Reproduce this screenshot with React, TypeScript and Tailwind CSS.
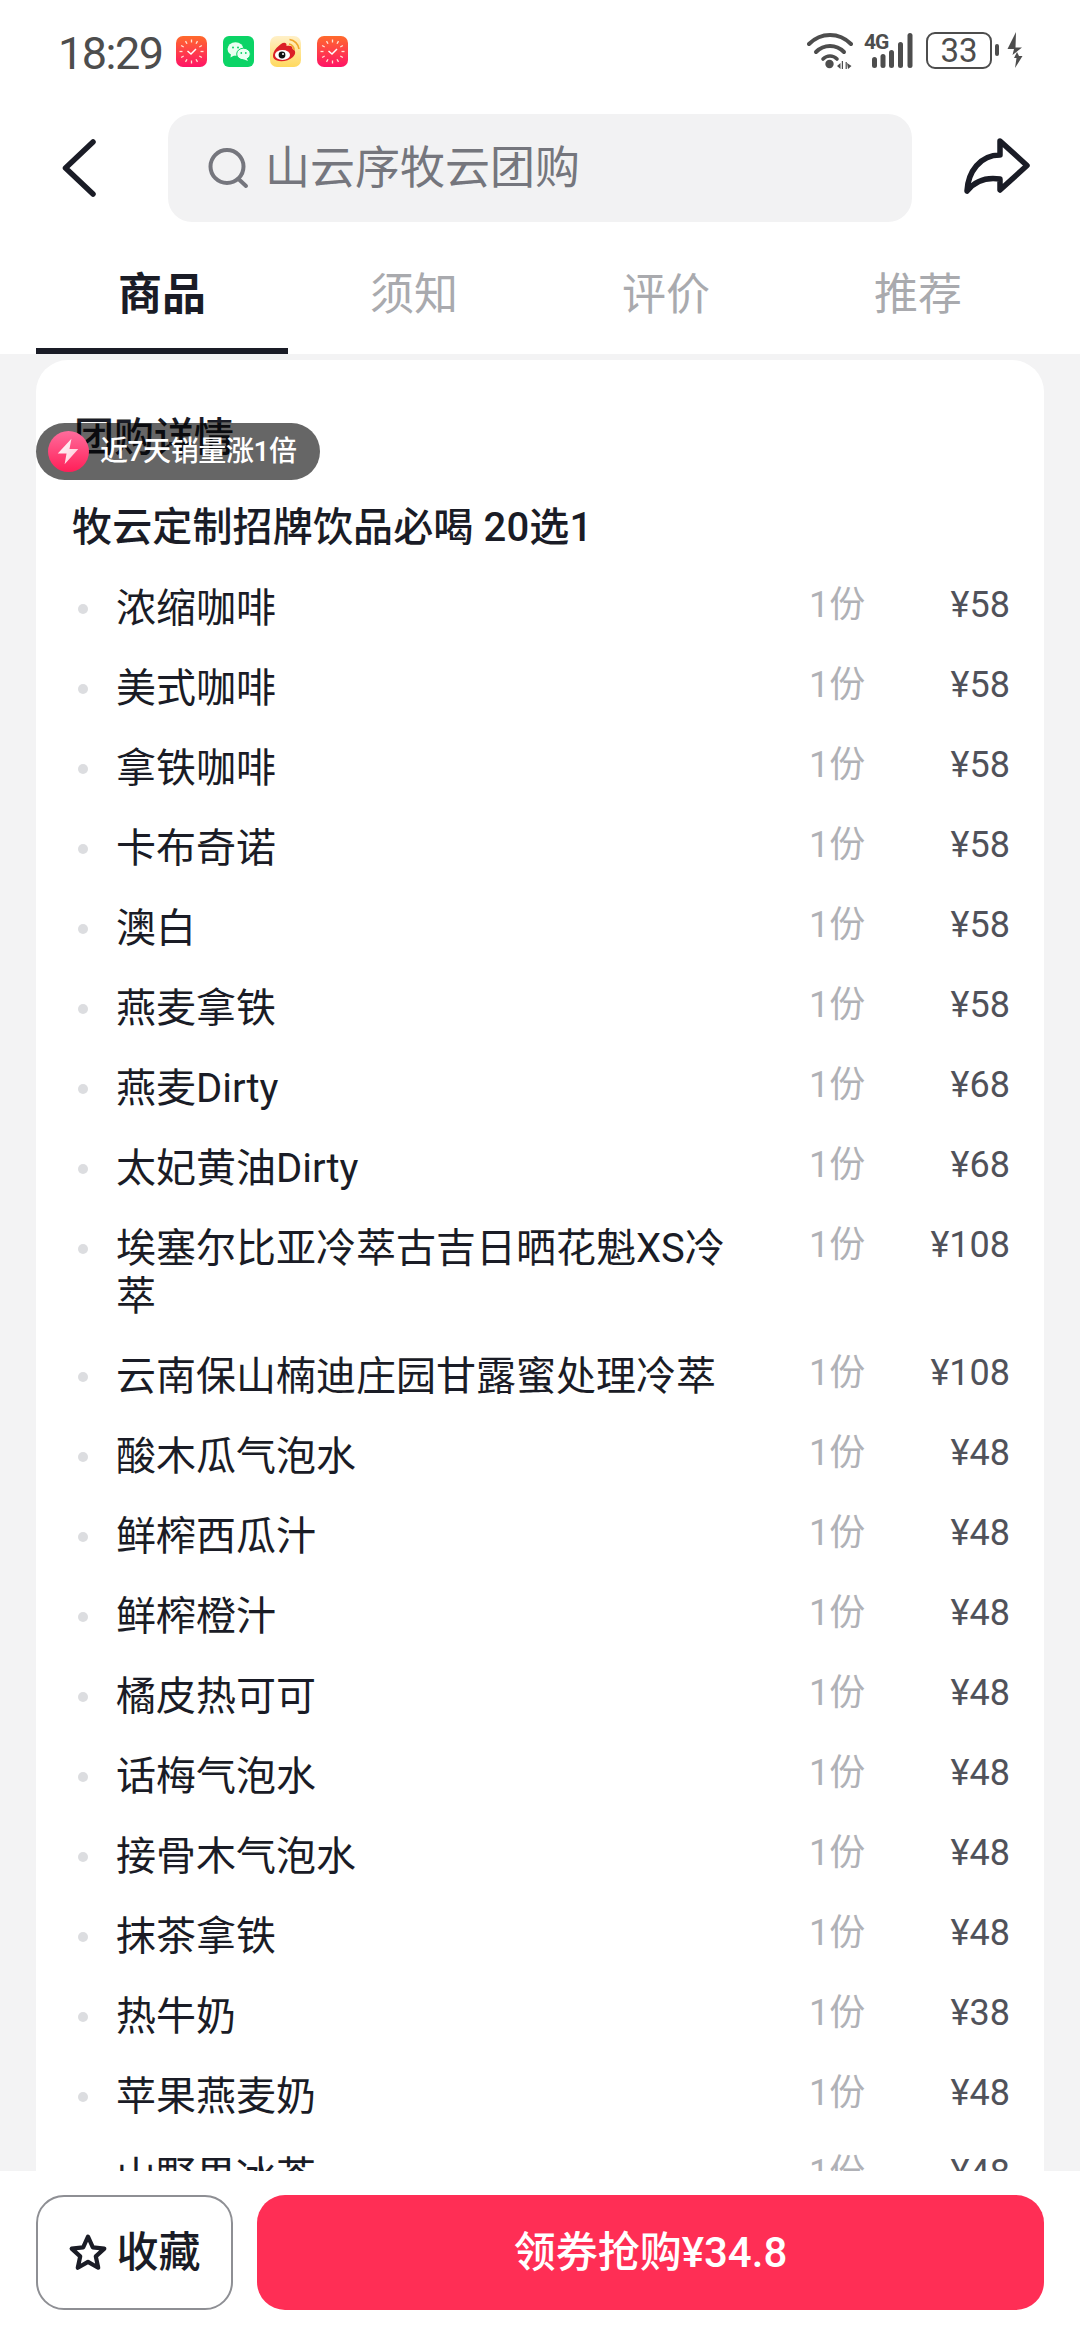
import React from "react";

const items: [string, string][] = [
  ["浓缩咖啡", "¥58"],
  ["美式咖啡", "¥58"],
  ["拿铁咖啡", "¥58"],
  ["卡布奇诺", "¥58"],
  ["澳白", "¥58"],
  ["燕麦拿铁", "¥58"],
  ["燕麦Dirty", "¥68"],
  ["太妃黄油Dirty", "¥68"],
  ["埃塞尔比亚冷萃古吉日晒花魁XS冷萃", "¥108"],
  ["云南保山楠迪庄园甘露蜜处理冷萃", "¥108"],
  ["酸木瓜气泡水", "¥48"],
  ["鲜榨西瓜汁", "¥48"],
  ["鲜榨橙汁", "¥48"],
  ["橘皮热可可", "¥48"],
  ["话梅气泡水", "¥48"],
  ["接骨木气泡水", "¥48"],
  ["抹茶拿铁", "¥48"],
  ["热牛奶", "¥38"],
  ["苹果燕麦奶", "¥48"],
  ["山野果冰茶", "¥48"],
];

function ClockIcon({ id }: { id: string }) {
  const ticks = [0, 30, 60, 90, 120, 150, 180, 210, 240, 270, 300, 330];
  return (
    <svg width="31" height="31" viewBox="0 0 31 31" className="shrink-0">
      <defs>
        <linearGradient id={id} x1="0" y1="0" x2="0" y2="1">
          <stop offset="0" stopColor="#ff6a2c" />
          <stop offset="1" stopColor="#ff1366" />
        </linearGradient>
      </defs>
      <rect width="31" height="31" rx="7" fill={`url(#${id})`} />
      {ticks.map((a) => (
        <line
          key={a}
          x1="15.5"
          y1="3.5"
          x2="15.5"
          y2="6.5"
          stroke="#ffe3d6"
          strokeWidth="1.3"
          transform={`rotate(${a} 15.5 15.5)`}
        />
      ))}
      <path d="M11.5 15 L15 18 L20 13" fill="none" stroke="#fff" strokeWidth="1.5" />
    </svg>
  );
}

function WeChatIcon() {
  return (
    <svg width="31" height="31" viewBox="0 0 31 31" className="shrink-0">
      <rect width="31" height="31" rx="6" fill="#0bd466" />
      <ellipse cx="12.5" cy="13" rx="8" ry="6.8" fill="#eafff2" />
      <path d="M8 17.5 L7.5 21.5 L12 19Z" fill="#eafff2" />
      <ellipse cx="20.5" cy="18" rx="6.8" ry="5.8" fill="#eafff2" stroke="#0bd466" strokeWidth="1" />
      <path d="M23.5 22 L25 25 L20.5 23.3Z" fill="#eafff2" />
      <circle cx="10" cy="11.5" r="1" fill="#0bd466" />
      <circle cx="15" cy="11.5" r="1" fill="#0bd466" />
      <circle cx="18.3" cy="17" r="0.9" fill="#0bd466" />
      <circle cx="22.8" cy="17" r="0.9" fill="#0bd466" />
    </svg>
  );
}

function WeiboIcon() {
  return (
    <svg width="31" height="31" viewBox="0 0 31 31" className="shrink-0">
      <defs>
        <linearGradient id="wb" x1="0" y1="0" x2="0" y2="1">
          <stop offset="0" stopColor="#fff0c8" />
          <stop offset="1" stopColor="#ffd95e" />
        </linearGradient>
      </defs>
      <rect width="31" height="31" rx="7" fill="url(#wb)" />
      <path
        d="M3 20 C3 15 7 11 11 8 C14 6 17 6.5 16.5 10 C20 9 23 10 22.5 13 C26 14 26 18 23 21 C19 25 11 26 7 24.5 C4.5 23.5 3 22 3 20Z"
        fill="#dc1f26"
      />
      <ellipse cx="12.5" cy="19" rx="7.5" ry="5" fill="#fff" />
      <circle cx="12" cy="19" r="3.4" fill="#111" />
      <circle cx="13" cy="18" r="1" fill="#fff" />
      <path d="M19 8 A6 6 0 0 1 24 14" fill="none" stroke="#f0a62a" strokeWidth="1.6" />
      <path d="M19.5 3.5 A11 11 0 0 1 29 13" fill="none" stroke="#f0a62a" strokeWidth="1.6" />
    </svg>
  );
}

function StatusRight() {
  return (
    <div className="flex items-start">
      <svg width="46" height="38" viewBox="0 0 46 38" className="shrink-0">
        <path d="M2 12 C14 0 32 0 44 12" fill="none" stroke="#4d4d4d" strokeWidth="4" strokeLinecap="round" />
        <path d="M9 20 C17 12 29 12 37 20" fill="none" stroke="#4d4d4d" strokeWidth="4" strokeLinecap="round" />
        <path d="M16 27 C20 23 26 23 30 27" fill="none" stroke="#4d4d4d" strokeWidth="3.6" strokeLinecap="round" />
        <circle cx="22.5" cy="32" r="4.2" fill="#4d4d4d" />
        <path d="M33.5 31 L33.5 37 L30 34Z M36 29 L36 37 L34.8 37 L34.8 29Z" fill="#4d4d4d" />
        <path d="M40 31 L44.5 34 L41 37Z M38.6 30 L39.8 30 L39.8 37 L38.6 37Z" fill="#4d4d4d" />
      </svg>
      <div className="relative ml-[11px] w-[50px] h-[38px]">
        <span className="absolute left-0 top-[-2px] text-[21px] leading-[24px] font-bold text-[#4d4d4d] tracking-[-1px] font-['Roboto',sans-serif]">
          4G
        </span>
        <svg width="50" height="38" viewBox="0 0 50 38" className="absolute left-0 top-0">
          <rect x="8" y="25" width="5" height="11" rx="2.5" fill="#4d4d4d" />
          <rect x="16.5" y="22" width="5" height="14" rx="2.5" fill="#4d4d4d" />
          <rect x="25" y="18" width="5" height="18" rx="2.5" fill="#4d4d4d" />
          <rect x="34" y="10" width="5" height="26" rx="2.5" fill="#4d4d4d" />
          <rect x="43.5" y="1" width="5" height="35" rx="2.5" fill="#4d4d4d" />
        </svg>
      </div>
      <div className="ml-[12px] w-[66px] h-[37px] rounded-[9px] border-[2px] border-[#4d4d4d] flex items-center justify-center text-[33px] leading-none text-[#4d4d4d] font-normal font-['Roboto',sans-serif]">
        33
      </div>
      <div className="ml-[3px] mt-[12px] w-[4px] h-[12px] rounded-[2px] bg-[#4d4d4d]" />
      <svg width="16" height="37" viewBox="0 0 16 37" className="ml-[8px] shrink-0">
        <path d="M9 0 L0.5 17 L7 17 L5.5 23 L15 15.5 L8.5 15.5 Z" fill="#4d4d4d" />
        <path d="M10 20 L7 26 L9.5 26 L8 36 L15.5 24 L12 24Z" fill="#4d4d4d" />
      </svg>
    </div>
  );
}

export default function App() {
  return (
    <div className="w-[1080px] h-[2340px] overflow-hidden bg-white flex flex-col font-['Roboto','Noto_Sans_CJK_SC',sans-serif]">
      {/* status bar */}
      <div className="h-[114px] shrink-0 flex items-start pl-[58px] pr-[57px] pt-[32px]">
        <span className="text-[45px] leading-[44px] tracking-[-1.5px] text-[#4d4d4d] w-[118px] shrink-0">18:29</span>
        <div className="flex gap-[16px] mt-[4px]">
          <ClockIcon id="c1" />
          <WeChatIcon />
          <WeiboIcon />
          <ClockIcon id="c2" />
        </div>
        <div className="ml-auto">
          <StatusRight />
        </div>
      </div>

      {/* header */}
      <div className="h-[108px] shrink-0 flex items-center pl-[36px]">
        <svg width="132" height="108" viewBox="0 0 132 108" className="shrink-0">
          <path
            d="M57 28 L29.5 54 L57 80"
            fill="none"
            stroke="#1a1c26"
            strokeWidth="5.5"
            strokeLinecap="round"
            strokeLinejoin="round"
          />
        </svg>
        <div className="w-[744px] h-[108px] rounded-[24px] bg-[#f2f2f3] flex items-center pl-[40px] shrink-0">
          <svg width="42" height="44" viewBox="0 0 42 44" className="shrink-0">
            <circle cx="19" cy="20.5" r="16.5" fill="none" stroke="#75767d" strokeWidth="4" />
            <path d="M30.5 33 L38 40" stroke="#75767d" strokeWidth="4" strokeLinecap="round" />
          </svg>
          <span className="ml-[15px] pt-[2px] text-[45px] leading-[52px] text-[#75767d]">山云序牧云团购</span>
        </div>
        <svg width="85" height="76" viewBox="0 0 85 76" className="ml-[43px] shrink-0">
          <path
            d="M45 11 L72 35.5 L45 60 L45 49 C32 47 20 51 12 61 C13 42 25 25 45 25 Z"
            fill="none"
            stroke="#1a1c26"
            strokeWidth="5.5"
            strokeLinecap="round"
            strokeLinejoin="round"
          />
        </svg>
      </div>

      {/* tabs */}
      <div className="h-[132px] shrink-0 px-[36px] grid grid-cols-4">
        <div className="flex items-center justify-center border-b-[6px] border-[#1a1c26] pt-[20px] text-[44px] font-bold text-[#1a1c26]">
          商品
        </div>
        <div className="flex items-center justify-center pt-[14px] text-[44px] text-[#a9aaae]">须知</div>
        <div className="flex items-center justify-center pt-[14px] text-[44px] text-[#a9aaae]">评价</div>
        <div className="flex items-center justify-center pt-[14px] text-[44px] text-[#a9aaae]">推荐</div>
      </div>

      {/* body */}
      <div className="relative flex-1 min-h-0 overflow-hidden bg-[#f3f3f4] pt-[6px] px-[36px]">
        <div className="bg-white rounded-[32px] pt-[54px] h-[1900px]">
          <div className="pl-[38px] text-[40px] leading-[48px] font-medium text-[#1a1c26]">团购详情</div>
          <div className="pl-[36px] mt-[42px] text-[40px] leading-[48px] font-medium tracking-[0.15px] text-[#1a1c26]">
            牧云定制招牌饮品必喝 20选1
          </div>
          <div className="mt-[17px]">
            {items.map(([name, price]) => (
              <div key={name} className="flex items-start pl-[42px] py-[16px]">
                <div className="w-[38px] h-[48px] shrink-0 flex items-center">
                  <div className="w-[10px] h-[10px] rounded-full bg-[#dcdde0]" />
                </div>
                <div className="w-[620px] shrink-0 text-[40px] leading-[48px] text-[#1a1c26]">{name}</div>
                <div className="ml-[73px] w-[60px] shrink-0 text-[36px] leading-[40px] text-[#b0b1b6]">1份</div>
                <div className="w-[141px] shrink-0 text-right text-[36px] leading-[41px] text-[#50525a]">{price}</div>
              </div>
            ))}
          </div>
        </div>
        <div className="absolute left-[36px] top-[69px] w-[284px] h-[57px] rounded-[29px] bg-black/60 flex items-center pl-[12px]">
          <svg width="41" height="41" viewBox="0 0 42 42" className="shrink-0">
            <defs>
              <linearGradient id="bd" x1="0" y1="0" x2="0" y2="1">
                <stop offset="0" stopColor="#ff6c9c" />
                <stop offset="1" stopColor="#ff1f58" />
              </linearGradient>
              <linearGradient id="bl" x1="0" y1="0" x2="1" y2="1">
                <stop offset="0" stopColor="#ffffff" />
                <stop offset="1" stopColor="#ffc4d4" />
              </linearGradient>
            </defs>
            <circle cx="21" cy="21" r="21" fill="url(#bd)" />
            <path d="M24 8 L10 23 L19 23 L17 34 L31 18.5 L22 18.5 Z" fill="url(#bl)" />
          </svg>
          <span className="ml-[11px] text-[28px] leading-[36px] font-medium tracking-[-0.4px] text-white whitespace-nowrap">近7天销量涨1倍</span>
        </div>
      </div>

      {/* bottom bar */}
      <div className="h-[169px] shrink-0 bg-white flex items-start gap-[24px] pt-[24px] px-[36px]">
        <div className="w-[197px] h-[115px] rounded-[28px] border-[2px] border-[#8e8f94] flex items-center justify-center shrink-0">
          <svg width="40" height="40" viewBox="0 0 38 38" className="shrink-0">
            <path
              d="M19 3.5 L23.6 13.6 L34.5 14.8 L26.4 22.2 L28.7 33 L19 27.5 L9.3 33 L11.6 22.2 L3.5 14.8 L14.4 13.6 Z"
              fill="none"
              stroke="#1a1c26"
              strokeWidth="4"
              strokeLinejoin="round"
            />
          </svg>
          <span className="ml-[8px] text-[42px] leading-[48px] font-medium text-[#1a1c26]">收藏</span>
        </div>
        <div className="flex-1 h-[115px] rounded-[28px] bg-[#ff2e55] flex items-center justify-center text-[42px] leading-[48px] font-medium text-white">
          领券抢购¥34.8
        </div>
      </div>
    </div>
  );
}
